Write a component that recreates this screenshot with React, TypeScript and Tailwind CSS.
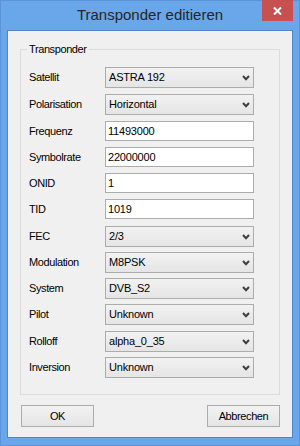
import React from "react";

type Row = { label: string; kind: "combo" | "text"; value: string; h: string };

const rows: Row[] = [
  { label: "Satellit", kind: "combo", value: "ASTRA 192", h: "h-[27px]" },
  { label: "Polarisation", kind: "combo", value: "Horizontal", h: "h-[27px]" },
  { label: "Frequenz", kind: "text", value: "11493000", h: "h-[26px]" },
  { label: "Symbolrate", kind: "text", value: "22000000", h: "h-[26px]" },
  { label: "ONID", kind: "text", value: "1", h: "h-[26px]" },
  { label: "TID", kind: "text", value: "1019", h: "h-[27px]" },
  { label: "FEC", kind: "combo", value: "2/3", h: "h-[26px]" },
  { label: "Modulation", kind: "combo", value: "M8PSK", h: "h-[26px]" },
  { label: "System", kind: "combo", value: "DVB_S2", h: "h-[26px]" },
  { label: "Pilot", kind: "combo", value: "Unknown", h: "h-[27px]" },
  { label: "Rolloff", kind: "combo", value: "alpha_0_35", h: "h-[26px]" },
  { label: "Inversion", kind: "combo", value: "Unknown", h: "h-[21px]" },
];

const font = "font-['Liberation_Sans',Arial,sans-serif] text-[11px] tracking-[-0.4px] text-black";

function Chevron() {
  return (
    <svg width="8" height="6" viewBox="0 0 8 6" className="shrink-0">
      <path d="M1 1 L4 4.2 L7 1" fill="none" stroke="#3f3f3f" strokeWidth="2" />
    </svg>
  );
}

function Combo({ value }: { value: string }) {
  return (
    <div className="flex h-[21px] w-[149px] items-center justify-between border border-[#acacac] bg-gradient-to-b from-[#f2f2f2] to-[#e5e5e5] pl-[3px] pr-[3px]">
      <span className="leading-none tracking-[-0.2px]">{value}</span>
      <Chevron />
    </div>
  );
}

function TextBox({ value }: { value: string }) {
  return (
    <div className="flex h-[20px] w-[149px] items-center border border-[#acacac] bg-white pl-[2px]">
      <span className="leading-none tracking-[-0.2px]">{value}</span>
    </div>
  );
}

export default function App() {
  return (
    <div className="relative flex h-[446px] w-[300px] flex-col border border-[#5b93d6] bg-[#6aa6ea]">
      <div className="flex h-[29px] items-center justify-center">
        <span className="font-['Liberation_Sans',Arial,sans-serif] text-[15px] text-[#262626]">
          Transponder editieren
        </span>
      </div>
      <div className="absolute right-[6px] top-[-1px] flex h-[21px] w-[31px] items-center justify-center bg-[#c75050]">
        <svg width="9" height="8" viewBox="0 0 9 8">
          <path d="M1 0.5 L8 7.5 M8 0.5 L1 7.5" stroke="#ffffff" strokeWidth="2" />
        </svg>
      </div>
      <div className="mx-[6px] mb-[7px] flex flex-1 flex-col border border-[#4e86c9] bg-[#f0f0f0]">
        <fieldset className={`ml-[12px] mt-[12px] w-[260px] border border-[#dcdcdc] pb-[16px] pl-[8px] pt-[11px] ${font}`}>
          <legend className="-ml-[2px] px-[2px] leading-[13px]">Transponder</legend>
          <div className="flex flex-col">
            {rows.map((r) => (
              <div key={r.label} className={`flex ${r.h} items-start`}>
                <div className={`flex w-[76px] items-center ${r.kind === "combo" ? "h-[21px]" : "h-[20px]"}`}>
                  <span className="leading-none">{r.label}</span>
                </div>
                {r.kind === "combo" ? <Combo value={r.value} /> : <TextBox value={r.value} />}
              </div>
            ))}
          </div>
        </fieldset>
        <div className={`mt-[10px] flex justify-between pl-[13px] pr-[12px] ${font}`}>
          <button className="flex h-[22px] w-[73px] items-center justify-center border border-[#acacac] bg-gradient-to-b from-[#f2f2f2] to-[#e5e5e5]">
            OK
          </button>
          <button className="flex h-[22px] w-[73px] items-center justify-center border border-[#acacac] bg-gradient-to-b from-[#f2f2f2] to-[#e5e5e5]">
            Abbrechen
          </button>
        </div>
      </div>
    </div>
  );
}
